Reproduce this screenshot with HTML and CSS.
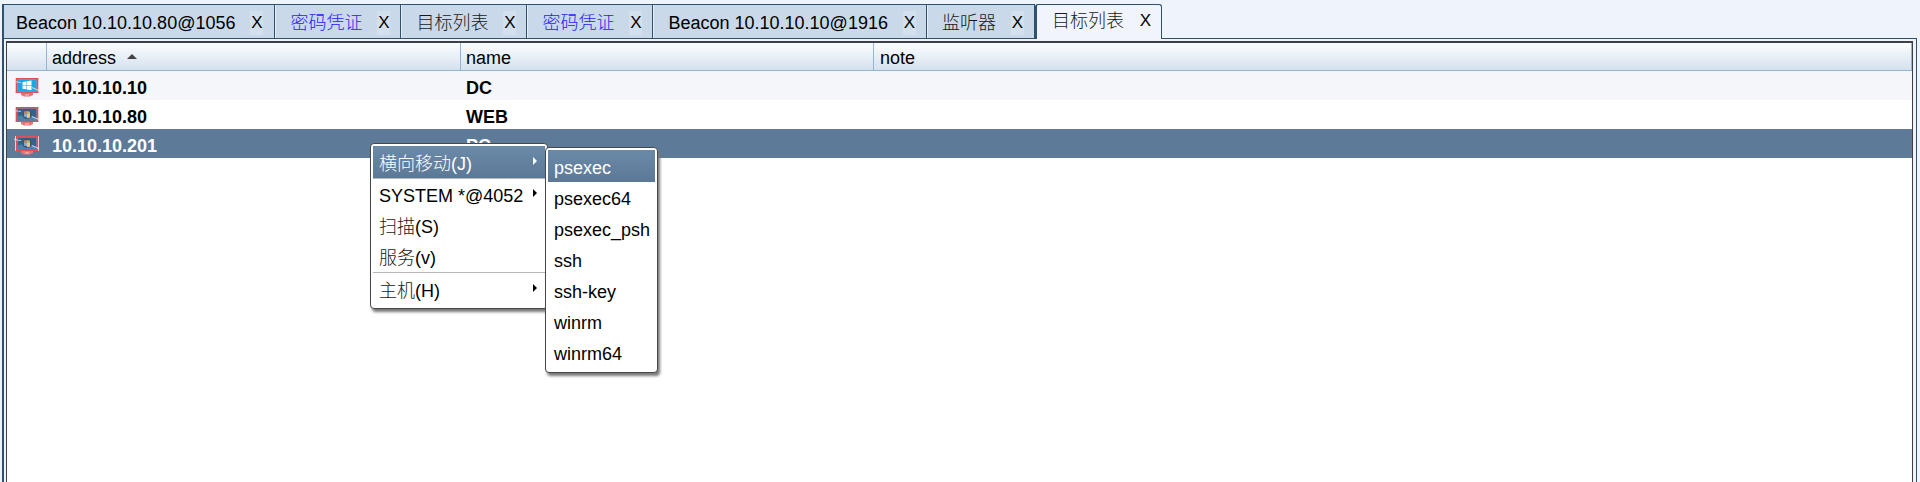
FILE: index.html
```html
<!DOCTYPE html>
<html lang="zh">
<head>
<meta charset="utf-8">
<title>目标列表</title>
<link rel="stylesheet" href="styles.css">
</head>
<body>
<svg class="defs" aria-hidden="true">
  <defs>
    <symbol id="screen" viewBox="0 0 26 20">
      <path d="M7 16h12v2l-3 1.500h-6L7 18z" fill="#e5737a"/>
      <path d="M1 1h24v15H1z" fill="#f0a6aa"/>
      <path d="M2 1h22v1.500H2zM2 14.500h22V16H2zM2 2h1.500v13H2zM22.500 2H24v13h-1.500z" fill="#dc4f57"/>
      <path d="M11 17.500h4v1h-4z" fill="#f3c9cb"/>
    </symbol>
    <symbol id="bolts" viewBox="0 0 26 20">
      <path d="M0 4l3 1 4 .5M18 10.500l3 1.500 2 .5 2 1.500" fill="none" stroke="#d5e6f5" stroke-width="1.200" opacity=".8"/>
      <path d="M1.500 1v14M24.500 2v13" fill="none" stroke="#f6d3d8" opacity=".7"/>
    </symbol>
    <symbol id="win8" viewBox="0 0 26 20">
      <use href="#screen" width="26" height="20"/>
      <path d="M3.500 2.500h19v12h-19z" fill="#16a8ea"/>
      <path d="M8.500 5l3.500-.6v3.700H8.500zM12.500 4.300L17.500 3.500v4.600h-5zM8.500 8.600H12v3.700l-3.500-.6zM12.500 8.600h5v4.600l-5-.8z" fill="#fff"/>
      <use href="#bolts" width="26" height="20"/>
    </symbol>
    <symbol id="win7" viewBox="0 0 26 20">
      <use href="#screen" width="26" height="20"/>
      <path d="M3.500 2.500h19v12h-19z" fill="#2f658c"/>
      <path d="M3.500 10.500l7-2 12 3v3h-19z" fill="#4587ab"/>
      <circle cx="13" cy="8" r="5" fill="#40586c"/>
      <path d="M10 5.500l3-.5v3h-3z" fill="#b9826f"/>
      <path d="M13 5l3 .8V8h-3z" fill="#a5bd84"/>
      <path d="M10 8h3v3.300l-3-.8z" fill="#7fb0d0"/>
      <path d="M13 8h3v3.500l-3 .7z" fill="#e3cc74"/>
      <use href="#bolts" width="26" height="20"/>
    </symbol>
  </defs>
</svg>
<main class="window">
  <nav class="tabs">
    <div class="tab"><button class="tab-name">Beacon 10.10.10.80@1056</button><button class="close">X</button></div>
    <div class="tab"><button class="tab-name alert">密码凭证</button><button class="close">X</button></div>
    <div class="tab"><button class="tab-name cjk">目标列表</button><button class="close">X</button></div>
    <div class="tab"><button class="tab-name alert">密码凭证</button><button class="close">X</button></div>
    <div class="tab"><button class="tab-name">Beacon 10.10.10.10@1916</button><button class="close">X</button></div>
    <div class="tab"><button class="tab-name cjk">监听器</button><button class="close">X</button></div>
    <div class="tab active"><button class="tab-name cjk">目标列表</button><button class="close">X</button></div>
  </nav>
  <section class="panel">
    <div class="viewport">
      <table class="targets">
        <colgroup><col class="c-icon"><col class="c-address"><col class="c-name"><col></colgroup>
        <thead>
          <tr><th></th><th>address<svg class="sort" viewBox="0 0 10 5"><path d="M5 0l5 5H0z" fill="#444"/></svg></th><th>name</th><th class="note">note</th></tr>
        </thead>
        <tbody>
          <tr class="odd"><td><svg class="host" viewBox="0 0 26 20"><use href="#win8" width="26" height="20"/></svg></td><td>10.10.10.10</td><td>DC</td><td></td></tr>
          <tr><td><svg class="host" viewBox="0 0 26 20"><use href="#win7" width="26" height="20"/></svg></td><td>10.10.10.80</td><td>WEB</td><td></td></tr>
          <tr class="selected"><td><svg class="host" viewBox="0 0 26 20"><use href="#win7" width="26" height="20"/></svg></td><td>10.10.10.201</td><td>PC</td><td></td></tr>
        </tbody>
      </table>
    </div>
  </section>
</main>
<div class="menu context">
  <button class="item current"><span>横向移动(J)</span><svg class="arrow" viewBox="0 0 4 8"><path d="M0 0l4 4-4 4z"/></svg></button>
  <hr>
  <button class="item"><span>SYSTEM *@4052</span><svg class="arrow" viewBox="0 0 4 8"><path d="M0 0l4 4-4 4z"/></svg></button>
  <button class="item"><span><span class="cjk">扫描</span>(S)</span></button>
  <button class="item"><span><span class="cjk">服务</span>(v)</span></button>
  <hr>
  <button class="item"><span><span class="cjk">主机</span>(H)</span><svg class="arrow" viewBox="0 0 4 8"><path d="M0 0l4 4-4 4z"/></svg></button>
</div>
<div class="menu submenu">
  <button class="item current">psexec</button>
  <button class="item">psexec64</button>
  <button class="item">psexec_psh</button>
  <button class="item">ssh</button>
  <button class="item">ssh-key</button>
  <button class="item">winrm</button>
  <button class="item">winrm64</button>
</div>
</body>
</html>
```
FILE: styles.css
```css
* { box-sizing: border-box; }
body {
  margin: 0;
  background: #eff3fb;
  color: #000;
  font: 300 18px/24px "Liberation Sans", "Noto Sans CJK SC", sans-serif;
  overflow: hidden;
}
button {
  margin: 0;
  padding: 0;
  border: 0;
  background: none;
  color: inherit;
  font: inherit;
  text-align: left;
  white-space: nowrap;
}
.defs { position: absolute; width: 0; height: 0; }
.window {
  display: flex;
  flex-direction: column;
  min-height: 100vh;
  padding: 4px 3px 0 2px;
}
.tabs { display: flex; height: 34px; }
.tab {
  display: flex;
  align-items: center;
  gap: 15px;
  padding: 3px 10px 0 15px;
  border-top: 1px solid #2f5170;
  border-right: 1px solid #2f5170;
  background: #c9d9ea;
  box-shadow: inset 1px 0 #e6eef7;
}
.tab:first-child { padding-left: 12px; padding-right: 11px; border-left: 2px solid #2f5170; box-shadow: none; }
.close {
  width: 13px;
  font-size: 17px;
  text-align: center;
  background: #d3e0ee;
}
.cjk { color: #181818; }
.alert { color: #2a20f8; }
.tab.active {
  height: 35px;
  padding: 0 9px 2px 15px;
  border-left: 2px solid #2f5170;
  border-radius: 3px 3px 0 0;
  background: #f1f4fb;
  box-shadow: none;
  position: relative;
}
.active .close { background: none; }
.panel {
  flex: 1;
  display: flex;
  padding: 2px 3px 0 2px;
  border: solid #2f5170;
  border-width: 1px 1px 0 2px;
}
.viewport {
  flex: 1;
  border: solid #3e4045;
  border-width: 2px 1px 0 1px;
  background: #fff;
}
.targets { width: 100%; table-layout: fixed; border-collapse: separate; border-spacing: 0; }
.c-icon { width: 40px; }
.c-address { width: 414px; }
.c-name { width: 413px; }
th {
  height: 28px;
  padding: 2px 5px 0;
  border: solid #93b5d5;
  border-width: 0 1px 1px 0;
  background: linear-gradient(#fbfdff, #d5e1ee);
  font-weight: normal;
  text-align: left;
}
.note { padding-left: 6px; }
.sort { width: 10px; height: 5px; margin: 0 0 5px 11px; }
td {
  height: 29px;
  padding: 5px 5px 0;
  font-weight: bold;
}
td:first-child { padding: 2px 0 0 7px; }
.odd { background: #f5f6f9; }
.selected { background: #5d7a98; color: #fff; }
.host { display: block; width: 26px; height: 20px; }
.menu {
  position: absolute;
  display: flex;
  flex-direction: column;
  padding: 2px 2px 3px;
  border: 1px solid #45484c;
  border-radius: 4px;
  background: #fff;
  box-shadow: 2px 3px 3px #777;
}
.context { left: 370px; top: 143px; width: 178px; }
.submenu { left: 545px; top: 147px; width: 113px; padding-bottom: 4px; }
.item {
  display: flex;
  align-items: center;
  justify-content: space-between;
  height: 31px;
  padding: 3px 6px 0;
}
.context .item { padding-right: 8px; }
.current { height: 32px; background: linear-gradient(#6b8aa9, #5c7896); color: #fff; }
.arrow { width: 4px; height: 8px; margin-bottom: 6px; fill: currentColor; }
.menu hr { width: 100%; margin: 0; border: 0; border-top: 1px solid #b8b8b8; }
.item + .item + hr { margin-bottom: 1px; }
```
